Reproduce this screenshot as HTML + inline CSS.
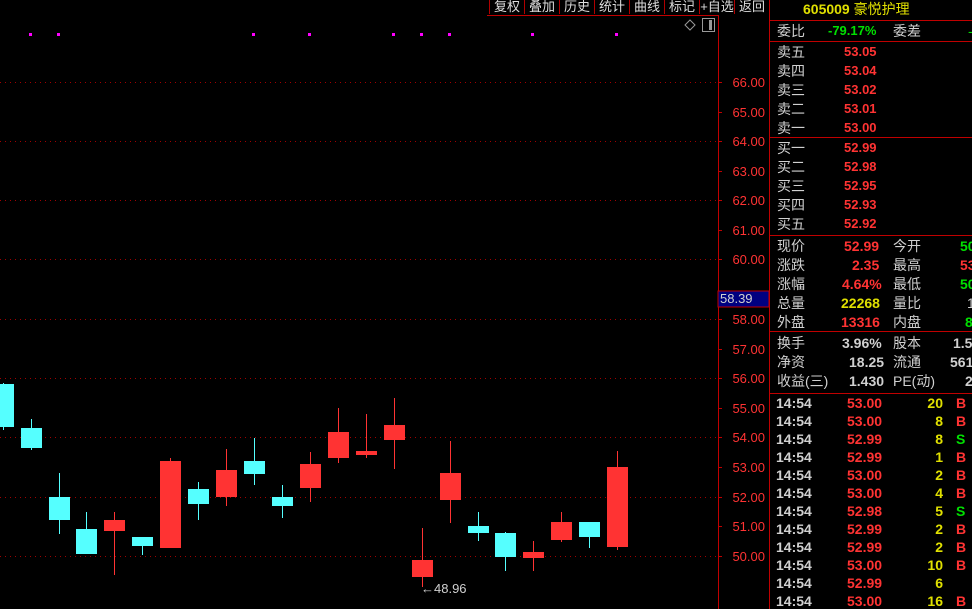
<!DOCTYPE html><html><head><meta charset="utf-8"><style>
body{margin:0;background:#000;width:972px;height:609px;overflow:hidden;position:relative;font-family:"Liberation Sans","Noto Sans CJK SC",sans-serif;}
.t{position:absolute;font-size:14px;line-height:16px;white-space:nowrap}
.w{color:#d0d0d0}.r{color:#ff3333}.g{color:#00e000}.y{color:#e0e000}
.tb{position:absolute;top:0;height:14px;font-size:13px;line-height:13px;color:#ddd;text-align:center;border-left:1px solid #b00000}
.ax{position:absolute;left:718px;width:47px;text-align:right;font-size:13px;color:#ff3333;line-height:13px}
</style></head><body>
<svg width="972" height="609" style="position:absolute;left:0;top:0">
<g stroke="#a00000" stroke-dasharray="1,4">
<line x1="0" x2="716" y1="82.5" y2="82.5"/><line x1="0" x2="716" y1="141.5" y2="141.5"/><line x1="0" x2="716" y1="200.5" y2="200.5"/><line x1="0" x2="716" y1="259.5" y2="259.5"/><line x1="0" x2="716" y1="319.5" y2="319.5"/><line x1="0" x2="716" y1="378.5" y2="378.5"/><line x1="0" x2="716" y1="437.5" y2="437.5"/><line x1="0" x2="716" y1="497.5" y2="497.5"/><line x1="0" x2="716" y1="556.5" y2="556.5"/>
</g>
<g fill="#ff00ff"><rect x="29" y="33" width="3" height="3"/><rect x="57" y="33" width="3" height="3"/><rect x="252" y="33" width="3" height="3"/><rect x="308" y="33" width="3" height="3"/><rect x="392" y="33" width="3" height="3"/><rect x="420" y="33" width="3" height="3"/><rect x="448" y="33" width="3" height="3"/><rect x="531" y="33" width="3" height="3"/><rect x="615" y="33" width="3" height="3"/></g>
<line x1="718.5" y1="15" x2="718.5" y2="609" stroke="#c00000"/>
<line x1="769.5" y1="0" x2="769.5" y2="609" stroke="#c00000"/>
<line x1="487" y1="15.5" x2="718" y2="15.5" stroke="#c00000"/>
<g stroke="#c00000"><line x1="718" x2="722" y1="82.5" y2="82.5"/><line x1="718" x2="722" y1="112.5" y2="112.5"/><line x1="718" x2="722" y1="141.5" y2="141.5"/><line x1="718" x2="722" y1="171.5" y2="171.5"/><line x1="718" x2="722" y1="200.5" y2="200.5"/><line x1="718" x2="722" y1="230.5" y2="230.5"/><line x1="718" x2="722" y1="259.5" y2="259.5"/><line x1="718" x2="722" y1="319.5" y2="319.5"/><line x1="718" x2="722" y1="349.5" y2="349.5"/><line x1="718" x2="722" y1="378.5" y2="378.5"/><line x1="718" x2="722" y1="408.5" y2="408.5"/><line x1="718" x2="722" y1="437.5" y2="437.5"/><line x1="718" x2="722" y1="467.5" y2="467.5"/><line x1="718" x2="722" y1="497.5" y2="497.5"/><line x1="718" x2="722" y1="526.5" y2="526.5"/><line x1="718" x2="722" y1="556.5" y2="556.5"/></g>
<path d="M690 20 l5 5 -5 5 -5 -5z" fill="none" stroke="#999"/>
<rect x="702.5" y="18.5" width="12" height="13" fill="none" stroke="#999"/><rect x="709" y="20" width="3" height="10" fill="#999"/>
<g fill="#55ffff" stroke="#55ffff">
<line x1="3.5" y1="383" x2="3.5" y2="430"/><rect x="0" y="384" width="14" height="43" stroke="none"/>
<line x1="31.5" y1="419" x2="31.5" y2="450"/><rect x="21" y="428" width="21" height="20" stroke="none"/>
<line x1="59.5" y1="473" x2="59.5" y2="534"/><rect x="49" y="497" width="21" height="23" stroke="none"/>
<line x1="86.5" y1="512" x2="86.5" y2="554"/><rect x="76" y="529" width="21" height="25" stroke="none"/>
<line x1="142.5" y1="546" x2="142.5" y2="555"/><rect x="132" y="537" width="21" height="9" stroke="none"/>
<line x1="198.5" y1="482" x2="198.5" y2="520"/><rect x="188" y="489" width="21" height="15" stroke="none"/>
<line x1="254.5" y1="438" x2="254.5" y2="485"/><rect x="244" y="461" width="21" height="13" stroke="none"/>
<line x1="282.5" y1="485" x2="282.5" y2="518"/><rect x="272" y="497" width="21" height="9" stroke="none"/>
<line x1="478.5" y1="512" x2="478.5" y2="541"/><rect x="468" y="526" width="21" height="7" stroke="none"/>
<line x1="505.5" y1="532" x2="505.5" y2="571"/><rect x="495" y="533" width="21" height="24" stroke="none"/>
<line x1="589.5" y1="537" x2="589.5" y2="548"/><rect x="579" y="522" width="21" height="15" stroke="none"/>
</g>
<g fill="#ff3333" stroke="#ff3333">
<line x1="114.5" y1="512" x2="114.5" y2="575"/><rect x="104" y="520" width="21" height="11" stroke="none"/>
<line x1="170.5" y1="458" x2="170.5" y2="548"/><rect x="160" y="461" width="21" height="87" stroke="none"/>
<line x1="226.5" y1="449" x2="226.5" y2="506"/><rect x="216" y="470" width="21" height="27" stroke="none"/>
<line x1="310.5" y1="452" x2="310.5" y2="502"/><rect x="300" y="464" width="21" height="24" stroke="none"/>
<line x1="338.5" y1="408" x2="338.5" y2="463"/><rect x="328" y="432" width="21" height="26" stroke="none"/>
<line x1="366.5" y1="414" x2="366.5" y2="458"/><rect x="356" y="451" width="21" height="4" stroke="none"/>
<line x1="394.5" y1="398" x2="394.5" y2="469"/><rect x="384" y="425" width="21" height="15" stroke="none"/>
<line x1="422.5" y1="528" x2="422.5" y2="587"/><rect x="412" y="560" width="21" height="17" stroke="none"/>
<line x1="450.5" y1="441" x2="450.5" y2="523"/><rect x="440" y="473" width="21" height="27" stroke="none"/>
<line x1="533.5" y1="541" x2="533.5" y2="571"/><rect x="523" y="552" width="21" height="6" stroke="none"/>
<line x1="561.5" y1="512" x2="561.5" y2="542"/><rect x="551" y="522" width="21" height="18" stroke="none"/>
<line x1="617.5" y1="451" x2="617.5" y2="550"/><rect x="607" y="467" width="21" height="80" stroke="none"/>
</g>
<rect x="718" y="291" width="51" height="16" fill="#000080" stroke="#c00000"/>
<g stroke="#c00000"><line x1="770" x2="972" y1="20.5" y2="20.5"/><line x1="770" x2="972" y1="41.5" y2="41.5"/><line x1="770" x2="972" y1="137.5" y2="137.5"/><line x1="770" x2="972" y1="235.5" y2="235.5"/><line x1="770" x2="972" y1="331.5" y2="331.5"/><line x1="770" x2="972" y1="393.5" y2="393.5"/></g>
</svg>
<div class="t w" style="left:421px;top:581px;font-size:13px">←48.96</div>
<div class="tb" style="left:489px;width:34px">复权</div><div class="tb" style="left:524px;width:34px">叠加</div><div class="tb" style="left:559px;width:34px">历史</div><div class="tb" style="left:594px;width:34px">统计</div><div class="tb" style="left:629px;width:34px">曲线</div><div class="tb" style="left:664px;width:34px">标记</div><div class="tb" style="left:699px;width:34px">+自选</div><div class="tb" style="left:734px;width:34px">返回</div>
<div class="ax" style="top:76px">66.00</div><div class="ax" style="top:106px">65.00</div><div class="ax" style="top:135px">64.00</div><div class="ax" style="top:165px">63.00</div><div class="ax" style="top:194px">62.00</div><div class="ax" style="top:224px">61.00</div><div class="ax" style="top:253px">60.00</div><div class="ax" style="top:313px">58.00</div><div class="ax" style="top:343px">57.00</div><div class="ax" style="top:372px">56.00</div><div class="ax" style="top:402px">55.00</div><div class="ax" style="top:431px">54.00</div><div class="ax" style="top:461px">53.00</div><div class="ax" style="top:491px">52.00</div><div class="ax" style="top:520px">51.00</div><div class="ax" style="top:550px">50.00</div>
<div class="t w" style="left:720px;top:292px;font-size:13px;line-height:14px">58.39</div>
<div class="t y" style="left:803px;top:1px;font-weight:bold">605009 <span style="font-weight:normal">豪悦护理</span></div>
<div class="t w" style="left:777px;top:23px">委比</div><div class="t g" style="left:828px;top:23px;font-weight:bold;font-size:13px">-79.17%</div><div class="t w" style="left:893px;top:23px">委差</div><div class="t g" style="left:968px;top:23px">-</div>
<div style="position:absolute;left:777px;top:44px;width:110px">
<div class="t w" style="top:0">卖五</div><div class="t r" style="left:67px;top:0;font-weight:bold;font-size:13px">53.05</div>
<div class="t w" style="top:19px">卖四</div><div class="t r" style="left:67px;top:19px;font-weight:bold;font-size:13px">53.04</div>
<div class="t w" style="top:38px">卖三</div><div class="t r" style="left:67px;top:38px;font-weight:bold;font-size:13px">53.02</div>
<div class="t w" style="top:57px">卖二</div><div class="t r" style="left:67px;top:57px;font-weight:bold;font-size:13px">53.01</div>
<div class="t w" style="top:76px">卖一</div><div class="t r" style="left:67px;top:76px;font-weight:bold;font-size:13px">53.00</div>
<div class="t w" style="top:96px">买一</div><div class="t r" style="left:67px;top:96px;font-weight:bold;font-size:13px">52.99</div>
<div class="t w" style="top:115px">买二</div><div class="t r" style="left:67px;top:115px;font-weight:bold;font-size:13px">52.98</div>
<div class="t w" style="top:134px">买三</div><div class="t r" style="left:67px;top:134px;font-weight:bold;font-size:13px">52.95</div>
<div class="t w" style="top:153px">买四</div><div class="t r" style="left:67px;top:153px;font-weight:bold;font-size:13px">52.93</div>
<div class="t w" style="top:172px">买五</div><div class="t r" style="left:67px;top:172px;font-weight:bold;font-size:13px">52.92</div>
</div>
<div style="position:absolute;left:777px;top:238px;width:200px;font-size:13px">
<div class="t w" style="top:0">现价</div><div class="t r" style="left:67px;top:0;font-weight:bold">52.99</div><div class="t w" style="left:116px;top:0">今开</div><div class="t g" style="left:183px;top:0;font-weight:bold">50</div>
<div class="t w" style="top:19px">涨跌</div><div class="t r" style="left:75px;top:19px;font-weight:bold">2.35</div><div class="t w" style="left:116px;top:19px">最高</div><div class="t r" style="left:183px;top:19px;font-weight:bold">53</div>
<div class="t w" style="top:38px">涨幅</div><div class="t r" style="left:65px;top:38px;font-weight:bold">4.64%</div><div class="t w" style="left:116px;top:38px">最低</div><div class="t g" style="left:183px;top:38px;font-weight:bold">50</div>
<div class="t w" style="top:57px">总量</div><div class="t y" style="left:64px;top:57px;font-weight:bold">22268</div><div class="t w" style="left:116px;top:57px">量比</div><div class="t w" style="left:190px;top:57px">1</div>
<div class="t w" style="top:76px">外盘</div><div class="t r" style="left:64px;top:76px;font-weight:bold">13316</div><div class="t w" style="left:116px;top:76px">内盘</div><div class="t g" style="left:188px;top:76px;font-weight:bold">8</div>
<div class="t w" style="top:97px">换手</div><div class="t w" style="left:65px;top:97px;font-weight:bold">3.96%</div><div class="t w" style="left:116px;top:97px">股本</div><div class="t w" style="left:176px;top:97px;font-weight:bold">1.5</div>
<div class="t w" style="top:116px">净资</div><div class="t w" style="left:72px;top:116px;font-weight:bold">18.25</div><div class="t w" style="left:116px;top:116px">流通</div><div class="t w" style="left:173px;top:116px;font-weight:bold">561</div>
<div class="t w" style="top:135px">收益(三)</div><div class="t w" style="left:72px;top:135px;font-weight:bold">1.430</div><div class="t w" style="left:116px;top:135px">PE(动)</div><div class="t w" style="left:188px;top:135px;font-weight:bold">2</div>
</div>
<div style="position:absolute;left:776px;top:395px;width:200px;font-size:13px;font-weight:bold">
<div class="t w" style="top:0">14:54</div><div class="t r" style="left:71px;top:0">53.00</div><div class="t y" style="left:120px;width:47px;text-align:right;top:0">20</div><div class="t r" style="left:180px;top:0">B</div>
<div class="t w" style="top:18px">14:54</div><div class="t r" style="left:71px;top:18px">53.00</div><div class="t y" style="left:120px;width:47px;text-align:right;top:18px">8</div><div class="t r" style="left:180px;top:18px">B</div>
<div class="t w" style="top:36px">14:54</div><div class="t r" style="left:71px;top:36px">52.99</div><div class="t y" style="left:120px;width:47px;text-align:right;top:36px">8</div><div class="t g" style="left:180px;top:36px">S</div>
<div class="t w" style="top:54px">14:54</div><div class="t r" style="left:71px;top:54px">52.99</div><div class="t y" style="left:120px;width:47px;text-align:right;top:54px">1</div><div class="t r" style="left:180px;top:54px">B</div>
<div class="t w" style="top:72px">14:54</div><div class="t r" style="left:71px;top:72px">53.00</div><div class="t y" style="left:120px;width:47px;text-align:right;top:72px">2</div><div class="t r" style="left:180px;top:72px">B</div>
<div class="t w" style="top:90px">14:54</div><div class="t r" style="left:71px;top:90px">53.00</div><div class="t y" style="left:120px;width:47px;text-align:right;top:90px">4</div><div class="t r" style="left:180px;top:90px">B</div>
<div class="t w" style="top:108px">14:54</div><div class="t r" style="left:71px;top:108px">52.98</div><div class="t y" style="left:120px;width:47px;text-align:right;top:108px">5</div><div class="t g" style="left:180px;top:108px">S</div>
<div class="t w" style="top:126px">14:54</div><div class="t r" style="left:71px;top:126px">52.99</div><div class="t y" style="left:120px;width:47px;text-align:right;top:126px">2</div><div class="t r" style="left:180px;top:126px">B</div>
<div class="t w" style="top:144px">14:54</div><div class="t r" style="left:71px;top:144px">52.99</div><div class="t y" style="left:120px;width:47px;text-align:right;top:144px">2</div><div class="t r" style="left:180px;top:144px">B</div>
<div class="t w" style="top:162px">14:54</div><div class="t r" style="left:71px;top:162px">53.00</div><div class="t y" style="left:120px;width:47px;text-align:right;top:162px">10</div><div class="t r" style="left:180px;top:162px">B</div>
<div class="t w" style="top:180px">14:54</div><div class="t r" style="left:71px;top:180px">52.99</div><div class="t y" style="left:120px;width:47px;text-align:right;top:180px">6</div>
<div class="t w" style="top:198px">14:54</div><div class="t r" style="left:71px;top:198px">53.00</div><div class="t y" style="left:120px;width:47px;text-align:right;top:198px">16</div><div class="t r" style="left:180px;top:198px">B</div>
</div>
</body></html>
